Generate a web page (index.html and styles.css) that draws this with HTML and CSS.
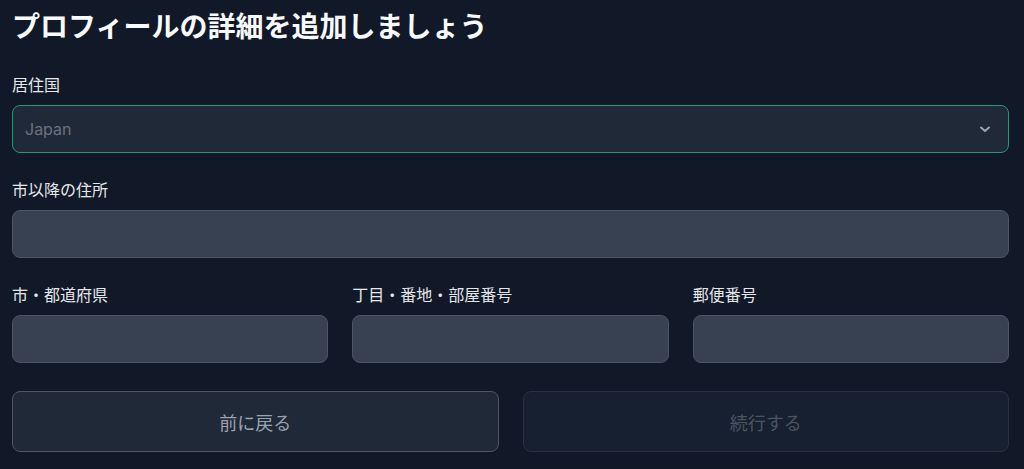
FILE: index.html
```html
<!DOCTYPE html>
<html lang="ja">
<head>
<meta charset="utf-8">
<link rel="stylesheet" href="styles.css">
</head>
<body>
<main class="page">
  <h1 class="title">プロフィールの詳細を追加しましょう</h1>
  <div class="field">
    <label class="label">居住国</label>
    <div class="select">
      <span class="select-value">Japan</span>
      <svg class="chevron" width="14" height="14" viewBox="0 0 14 14"><path d="M3 5.5 L7 9 L11 5.5" fill="none" stroke="#9ca3af" stroke-width="2" stroke-linecap="round" stroke-linejoin="round"/></svg>
    </div>
  </div>
  <div class="field">
    <label class="label">市以降の住所</label>
    <div class="input"></div>
  </div>
  <div class="row3">
    <div class="field">
      <label class="label">市・都道府県</label>
      <div class="input"></div>
    </div>
    <div class="field">
      <label class="label">丁目・番地・部屋番号</label>
      <div class="input"></div>
    </div>
    <div class="field">
      <label class="label">郵便番号</label>
      <div class="input"></div>
    </div>
  </div>
  <div class="actions">
    <button class="btn btn-back">前に戻る</button>
    <button class="btn btn-next">続行する</button>
  </div>
</main>
</body>
</html>
```
FILE: styles.css
```css
html, body {
  margin: 0;
  padding: 0;
  background: #111827;
}
body {
  font-family: "Inter", "Noto Sans CJK JP", sans-serif;
  color: #e5e7eb;
}
.page {
  width: 997px;
  padding: 7px 0 0 12px;
  display: flex;
  flex-direction: column;
}
.title {
  margin: 0 0 29px 0;
  font-size: 28px;
  line-height: 36px;
  font-weight: 700;
  color: #f9fafb;
  font-family: "Noto Sans CJK JP", sans-serif;
}
.field {
  display: flex;
  flex-direction: column;
  margin-bottom: 24px;
}
.label {
  font-size: 16px;
  line-height: 24px;
  margin-bottom: 9px;
  color: #e5e7eb;
  font-family: "Noto Sans CJK JP", sans-serif;
  font-weight: 400;
}
.select {
  box-sizing: border-box;
  height: 48px;
  border: 1px solid #1f9a72;
  border-radius: 8px;
  background: #1f2937;
  display: flex;
  align-items: center;
  justify-content: space-between;
  padding: 0 16px 0 12px;
}
.select-value {
  font-size: 16px;
  color: #6b7280;
}
.chevron {
  display: block;
}
.input {
  box-sizing: border-box;
  height: 48px;
  border: 1px solid #4b5563;
  border-radius: 8px;
  background: #374151;
}
.row3 {
  display: grid;
  grid-template-columns: 1fr 1fr 1fr;
  gap: 24px;
}
.row3 .field {
  margin-bottom: 28px;
}
.actions {
  display: grid;
  grid-template-columns: 1fr 1fr;
  gap: 24px;
}
.btn {
  box-sizing: border-box;
  height: 61px;
  border-radius: 8px;
  font-family: "Noto Sans CJK JP", sans-serif;
  font-size: 18px;
  display: flex;
  align-items: center;
  justify-content: center;
  padding: 0;
}
.btn-back {
  background: #1f2937;
  border: 1px solid #4b5563;
  color: #9ca3af;
}
.btn-next {
  background: #172030;
  border: 1px solid #283241;
  color: #4b5563;
}
```
